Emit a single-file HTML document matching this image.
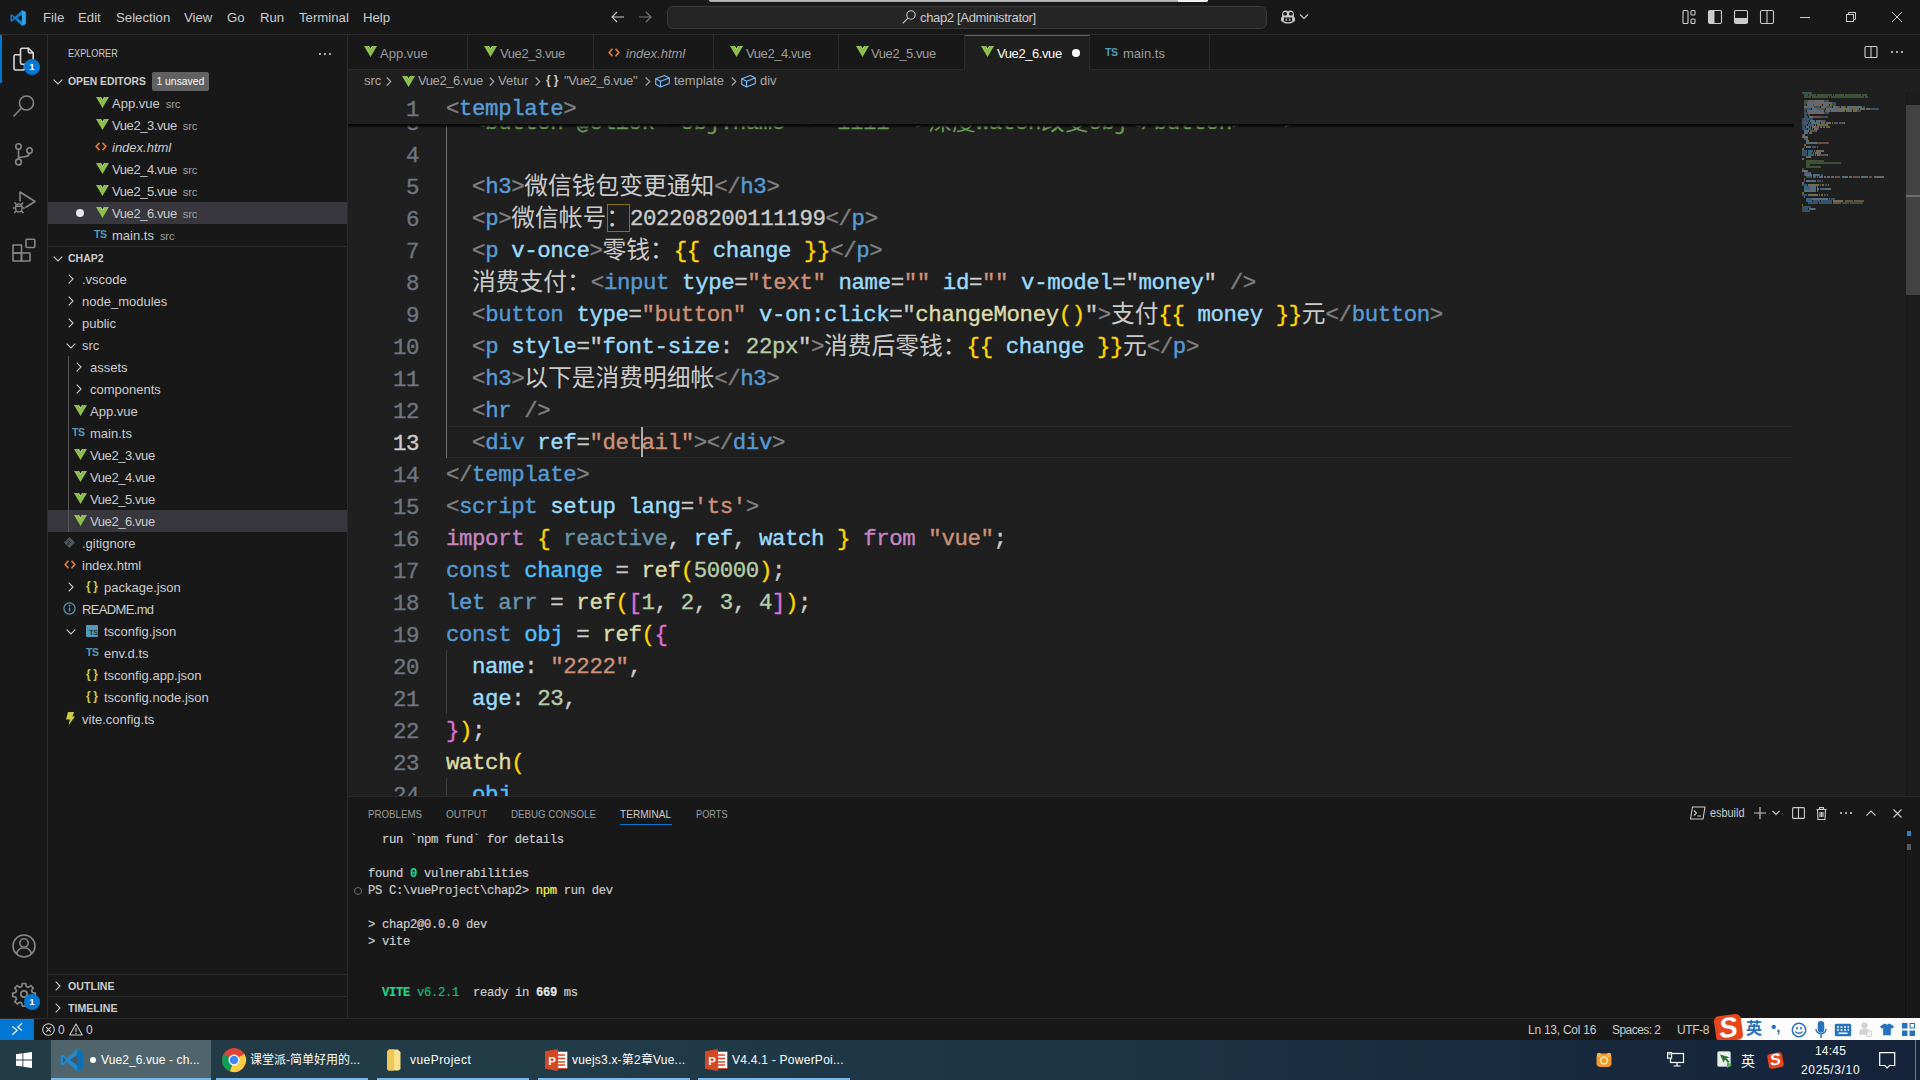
<!DOCTYPE html>
<html lang="zh">
<head>
<meta charset="utf-8">
<title>Vue2_6.vue - chap2 - Visual Studio Code</title>
<style>
*{box-sizing:border-box;margin:0;padding:0}
html,body{width:1920px;height:1080px;overflow:hidden;background:#181818}
body{position:relative;font-family:"Liberation Sans","Noto Sans CJK SC",sans-serif;font-size:13px;color:#ccc;-webkit-font-smoothing:antialiased}
.abs{position:absolute}
.t{position:absolute;white-space:pre;line-height:1}
svg{position:absolute;overflow:visible}
/* title bar */
#titlebar{position:absolute;left:0;top:0;width:1920px;height:35px;background:#181818;border-bottom:1px solid #2b2b2b}
.menu{position:absolute;top:10px;font-size:13.2px;color:#ccc;line-height:16px;white-space:pre}
#cmd{position:absolute;left:667px;top:6px;width:600px;height:23px;background:#252526;border:1px solid #3a3a3a;border-radius:6px}
/* activity bar */
#activity{position:absolute;left:0;top:35px;width:48px;height:983px;background:#181818;border-right:1px solid #2b2b2b}
/* sidebar */
#sidebar{position:absolute;left:48px;top:35px;width:300px;height:983px;background:#181818;border-right:1px solid #2b2b2b;overflow:hidden}
.row{position:absolute;left:0;width:299px;height:22px;line-height:22px;font-size:13px;color:#ccc;white-space:pre}
.row .lbl{position:absolute;top:1px}
.row .desc{color:#9d9d9d;font-size:11.3px;margin-left:6px;letter-spacing:-.2px}
.hdr{font-weight:bold;font-size:11px;color:#ccc}
/* editor */
#tabs{position:absolute;left:348px;top:35px;width:1572px;height:35px;background:#181818;border-bottom:1px solid #2b2b2b}
.tab{position:absolute;top:0;height:35px;border-right:1px solid #2b2b2b;font-size:13px;color:#9d9d9d;line-height:35px;white-space:pre}
.tab.active{background:#1f1f1f;color:#fff;border-top:1px solid #0078d4;height:36px}
#crumbs{position:absolute;left:348px;top:70px;width:1572px;height:22px;background:#1f1f1f;color:#a9a9a9;font-size:13px;line-height:22px}
#editor{position:absolute;left:348px;top:92px;width:1572px;height:704px;background:#1f1f1f;overflow:hidden}
.ln{position:absolute;left:0;width:71px;text-align:right;height:32px;line-height:32px;padding-top:2px;color:#6e7681;font-family:"Liberation Mono",monospace;font-size:22.4px;letter-spacing:-.402px;white-space:pre;-webkit-text-stroke:.38px currentColor}
.cl{position:absolute;left:98px;height:32px;line-height:32px;padding-top:1px;color:#ccc;font-family:"Liberation Mono","Noto Sans CJK SC",monospace;font-size:22.4px;letter-spacing:-.402px;white-space:pre;-webkit-text-stroke:.38px currentColor}
.cl i{font-style:normal;font-size:23.75px;font-family:"Noto Sans CJK SC",sans-serif;display:inline-block;width:23.75px;text-align:center;line-height:32px;vertical-align:top;position:relative;top:-3px;-webkit-text-stroke:0;letter-spacing:0}
.tg{color:#569cd6}.pu{color:#808080}.at{color:#9cdcfe}.st{color:#ce9178}.kw{color:#c586c0}.fn{color:#dcdcaa}.nu{color:#b5cea8}.cm{color:#6a9955}.b1{color:#ffd700}.b2{color:#da70d6}.b3{color:#179fff}.cv{color:#4fc1ff}.dim{opacity:.62}
/* panel */
#panel{position:absolute;left:348px;top:796px;width:1572px;height:222px;background:#181818;border-top:1px solid #2b2b2b;overflow:hidden}
.ptab{position:absolute;top:9px;font-size:11px;color:#9d9d9d;line-height:16px;white-space:pre}
.tl{position:absolute;left:20px;height:17px;line-height:17px;padding-top:1px;font-family:"Liberation Mono",monospace;font-size:12.2px;letter-spacing:-.32px;color:#ccc;white-space:pre;-webkit-text-stroke:.2px currentColor}
/* status */
#status{position:absolute;left:0;top:1018px;width:1920px;height:22px;background:#181818;border-top:1px solid #2b2b2b;font-size:12px;color:#ccc}
#status .s{position:absolute;top:1px;line-height:21px;white-space:pre}
/* taskbar */
#taskbar{position:absolute;left:0;top:1040px;width:1920px;height:40px;background:linear-gradient(90deg,#233b45 0%,#213b48 30%,#1c3344 60%,#17283c 85%,#15233a 100%);font-size:12px;color:#fff}
.tbtn{position:absolute;top:0;height:40px}
.tbtn .ul{position:absolute;left:0;right:0;bottom:0;height:2px;background:#76b9ed}
.tbtn .tx{position:absolute;top:12px;line-height:16px;font-size:12px;color:#fff;white-space:pre}
</style>
</head>
<body>
<!-- TITLE BAR -->
<div id="titlebar">
  <svg style="left:10px;top:9.500px" width="16" height="16" viewBox="0 0 100 100"><path d="M74 2 31 42 12 27 3 31v38l9 4 19-15 43 40 24-10V12z" fill="#0c7fd0"/><path d="M74 2v96l24-10V12z" fill="#2aa4f4"/><path d="M74 29 45 50l29 21z" fill="#181818"/><path d="M12 38v24l12-12z" fill="#181818"/></svg>
  <span class="menu" style="left:43px">File</span>
  <span class="menu" style="left:78px">Edit</span>
  <span class="menu" style="left:116px">Selection</span>
  <span class="menu" style="left:184px">View</span>
  <span class="menu" style="left:227px">Go</span>
  <span class="menu" style="left:260px">Run</span>
  <span class="menu" style="left:299px">Terminal</span>
  <span class="menu" style="left:363px">Help</span>
  <!-- nav arrows -->
  <svg style="left:610px;top:9px" width="16" height="16" viewBox="0 0 16 16" fill="none" stroke="#ccc" stroke-width="1.1"><path d="M14 8H2.5M7 3 2 8l5 5"/></svg>
  <svg style="left:637px;top:9px" width="16" height="16" viewBox="0 0 16 16" fill="none" stroke="#7a7a7a" stroke-width="1.1"><path d="M2 8h11.5M9 3l5 5-5 5"/></svg>
  <div id="cmd">
    <svg style="left:233px;top:2px" width="16" height="16" viewBox="0 0 16 16" fill="none" stroke="#ccc" stroke-width="1.1"><circle cx="10" cy="6" r="4.2"/><path d="M7 9.2 1.8 14.4"/></svg>
    <span class="t" style="left:252px;top:4px;font-size:13px;color:#ccc;letter-spacing:-.33px">chap2 [Administrator]</span>
  </div>
  <!-- copilot -->
  <svg style="left:1279px;top:8px" width="18" height="18" viewBox="0 0 18 18"><path d="M3.2 5.2C3.6 3.2 5.4 2.4 7 2.6c.9.1 1.6.5 2 1 .4-.5 1.100-.900 2-1 1.600-.200 3.400.600 3.800 2.600.3 1.300.1 2.400-.2 3 .8.600 1.400 1.600 1.400 2.600v1.400c0 .3-.1.500-.3.700C14.100 14.500 11.700 15.600 9 15.600S3.900 14.500 2.300 12.900C2.100 12.700 2 12.500 2 12.200v-1.400c0-1 .6-2 1.400-2.600-.300-.600-.500-1.700-.200-3z" fill="#ccc"/><rect x="4.200" y="4" width="3.800" height="3.600" rx="1.500" fill="#181818"/><rect x="10" y="4" width="3.800" height="3.600" rx="1.500" fill="#181818"/><path d="M4.800 9.600h8.400v3.600c-1.300.700-2.700 1-4.200 1s-2.900-.300-4.200-1z" fill="#181818"/><rect x="6.600" y="10.400" width="1.300" height="2.400" rx=".6" fill="#ccc"/><rect x="10.100" y="10.400" width="1.300" height="2.400" rx=".6" fill="#ccc"/></svg>
  <svg style="left:1299px;top:13px" width="10" height="8" viewBox="0 0 10 8" fill="none" stroke="#ccc" stroke-width="1.100"><path d="M1 1.500 5 5.500l4-4"/></svg>
  <!-- layout controls -->
  <svg style="left:1681px;top:9px" width="16" height="16" viewBox="0 0 16 16" fill="none" stroke="#ccc" stroke-width="1.100"><rect x="2" y="1.500" width="5" height="13" rx="1"/><rect x="10" y="1.500" width="4" height="4.500" rx="1"/><rect x="10" y="10" width="4" height="4.500" rx="1"/></svg>
  <svg style="left:1707px;top:9px" width="16" height="16" viewBox="0 0 16 16" fill="none" stroke="#ccc" stroke-width="1.100"><rect x="1.500" y="1.500" width="13" height="13" rx="1.500"/><rect x="2" y="2" width="5.500" height="12" fill="#ccc" stroke="none"/></svg>
  <svg style="left:1733px;top:9px" width="16" height="16" viewBox="0 0 16 16" fill="none" stroke="#ccc" stroke-width="1.100"><rect x="1.500" y="1.500" width="13" height="13" rx="1.500"/><rect x="2" y="9" width="12" height="5" fill="#ccc" stroke="none"/></svg>
  <svg style="left:1759px;top:9px" width="16" height="16" viewBox="0 0 16 16" fill="none" stroke="#ccc" stroke-width="1.100"><rect x="1.500" y="1.500" width="13" height="13" rx="1.500"/><path d="M8 1.500v13"/></svg>
  <!-- window controls -->
  <svg style="left:1800px;top:17px" width="10" height="1" viewBox="0 0 10 1"><rect width="10" height="1" fill="#ccc"/></svg>
  <svg style="left:1846px;top:12px" width="10" height="10" viewBox="0 0 10 10" fill="none" stroke="#ccc" stroke-width="1"><rect x=".5" y="2.500" width="7" height="7"/><path d="M2.500 2.500v-2h7v7h-2"/></svg>
  <svg style="left:1892px;top:12px" width="10" height="10" viewBox="0 0 10 10" fill="none" stroke="#ccc" stroke-width="1"><path d="M0 0l10 10M10 0 0 10"/></svg>
  <!-- light sliver at very top -->
  <div class="abs" style="left:709px;top:0;width:499px;height:2px;background:linear-gradient(180deg,#c4c4c4 0%,#9a9a9a 100%);border-radius:0 0 3px 3px"></div><div class="abs" style="left:1178px;top:0;width:30px;height:2px;background:#f2f2f2;border-radius:0 0 3px 0"></div>
</div>
<!-- ACTIVITY BAR -->
<div id="activity">
  <div class="abs" style="left:0;top:0;width:2px;height:48px;background:#0078d4"></div>
  <!-- explorer (files) -->
  <svg style="left:12px;top:12px" width="24" height="24" viewBox="0 0 24 24" fill="none" stroke="#d7d7d7" stroke-width="1.600" stroke-linejoin="round" stroke-linecap="round"><path d="M10 1.200h6.500l4.700 4.700v9.800a1.500 1.500 0 0 1-1.500 1.500H10a1.500 1.500 0 0 1-1.500-1.500V2.700A1.500 1.500 0 0 1 10 1.200z"/><path d="M16.300 1.400v3.100a1.500 1.500 0 0 0 1.500 1.500H21"/><path d="M8.300 7.800H3.500A1.500 1.500 0 0 0 2 9.300v12.200A1.500 1.500 0 0 0 3.500 23H11a1.500 1.500 0 0 0 1.500-1.500v-4"/></svg>
  <div class="abs" style="left:24px;top:24px;width:16px;height:16px;border-radius:8px;background:#0078d4;color:#fff;font-size:9.500px;font-weight:bold;text-align:center;line-height:16px">1</div>
  <!-- search -->
  <svg style="left:12px;top:59px" width="24" height="24" viewBox="0 0 24 24" fill="none" stroke="#868686" stroke-width="1.600"><circle cx="14.500" cy="9" r="7"/><path d="M9.500 14 1.500 22.500"/></svg>
  <!-- scm -->
  <svg style="left:12px;top:107px" width="24" height="24" viewBox="0 0 24 24" fill="none" stroke="#868686" stroke-width="1.600"><circle cx="6.500" cy="4.500" r="2.700"/><circle cx="6.500" cy="20" r="2.900"/><circle cx="17.500" cy="8.500" r="2.700"/><path d="M6.500 7.200v10M17.500 11.200c0 3.500-5 4-11 4.300"/></svg>
  <!-- debug -->
  <svg style="left:12px;top:155px" width="24" height="24" viewBox="0 0 24 24" fill="none" stroke="#868686" stroke-width="1.600" stroke-linejoin="round"><path d="M8 11.500v-9.500l15 9.500-9.500 6"/><ellipse cx="6.800" cy="18" rx="3.300" ry="4"/><path d="M4.500 14.500 2.500 12.500M9.200 14.500l2-2M3.500 18H.8M10.200 18h2.600M4.200 21 2.200 23M9.400 21l2 2M3.700 16.200h6.200"/></svg>
  <!-- extensions -->
  <svg style="left:12px;top:203px" width="24" height="24" viewBox="0 0 24 24" fill="none" stroke="#868686" stroke-width="1.600" stroke-linejoin="round"><rect x="1" y="7" width="8.500" height="8"/><rect x="1" y="15" width="8.500" height="8"/><rect x="9.500" y="15" width="8.500" height="8"/><rect x="14" y="1.200" width="8.800" height="8.300" rx="1"/></svg>
  <!-- account -->
  <svg style="left:12px;top:899px" width="24" height="24" viewBox="0 0 24 24" fill="none" stroke="#868686" stroke-width="1.600"><circle cx="12" cy="12" r="11"/><circle cx="12" cy="9" r="4.200"/><path d="M4.500 20c1-4 4-6.200 7.500-6.200s6.500 2.200 7.500 6.200"/></svg>
  <!-- settings gear -->
  <svg style="left:12px;top:947px" width="24" height="24" viewBox="0 0 24 24" fill="none" stroke="#868686" stroke-width="1.700" stroke-linejoin="round"><circle cx="12" cy="12" r="3.200"/><path d="M10.300 1.500h3.400l.6 3 1.900.8 2.600-1.700 2.400 2.400-1.700 2.600.8 1.900 3 .6v3.400l-3 .6-.8 1.900 1.700 2.600-2.400 2.400-2.600-1.700-1.900.8-.6 3h-3.400l-.6-3-1.900-.8-2.600 1.700-2.400-2.400 1.700-2.600-.8-1.900-3-.6v-3.400l3-.6.800-1.900-1.700-2.600 2.400-2.400 2.600 1.700 1.900-.8z"/></svg>
  <div class="abs" style="left:24px;top:959px;width:16px;height:16px;border-radius:8px;background:#0078d4;color:#fff;font-size:9.500px;font-weight:bold;text-align:center;line-height:16px">1</div>
</div>
<!-- SIDEBAR -->
<div id="sidebar">
<span class="t" style="left:20px;top:13px;font-size:11px;color:#ccc;transform:scaleX(.83);transform-origin:0 0">EXPLORER</span>
<svg style="left:270px;top:17px" width="14" height="4" viewBox="0 0 14 4" fill="#ccc"><circle cx="2" cy="2" r="1.100"/><circle cx="7" cy="2" r="1.100"/><circle cx="12" cy="2" r="1.100"/></svg>
<svg style="left:5px;top:44px" width="10" height="6" viewBox="0 0 10 6" fill="none" stroke="#ccc" stroke-width="1.100"><path d="M.7.7 5 5 9.300.7"/></svg>
<div class="row hdr" style="top:35px"><span class="lbl" style="left:20px;top:0;transform:scaleX(.938);transform-origin:0 0">OPEN EDITORS</span></div>
<div class="abs" style="left:104px;top:37px;width:57px;height:19px;background:#616161;border-radius:2px;color:#f8f8f8;font-size:11px;line-height:19px;text-align:center;white-space:pre"><span style="display:inline-block;transform:scaleX(.945)">1 unsaved</span></div>
<div class="abs" style="left:0;top:167px;width:299px;height:22px;background:#37373d"></div>
<svg style="left:48px;top:62px" width="13" height="11" viewBox="0 0 13 11"><path d="M0 0h3.400l3.100 5.300L9.600 0H13L6.500 11z" fill="#8dc149"/><path d="M3.400 0h1.700l1.400 2.400L7.900 0h1.700L6.500 5.300z" fill="#a6d468"/></svg>
<div class="row " style="top:57px"><span class="lbl" style="left:64px;">App.vue<span class="desc">src</span></span></div>
<svg style="left:48px;top:84px" width="13" height="11" viewBox="0 0 13 11"><path d="M0 0h3.400l3.100 5.300L9.600 0H13L6.500 11z" fill="#8dc149"/><path d="M3.400 0h1.700l1.400 2.400L7.900 0h1.700L6.500 5.300z" fill="#a6d468"/></svg>
<div class="row " style="top:79px"><span class="lbl" style="left:64px;"><span style="letter-spacing:-.42px;">Vue2_3.vue</span><span class="desc">src</span></span></div>
<svg style="left:47px;top:107px" width="12" height="9" viewBox="0 0 12 9" fill="none" stroke="#e37933" stroke-width="1.700"><path d="M4.500 .8 1.200 4.500l3.300 3.700M7.500 .8l3.300 3.700-3.300 3.700"/></svg>
<div class="row " style="top:101px"><span class="lbl" style="left:64px;font-style:italic;">index.html</span></div>
<svg style="left:48px;top:128px" width="13" height="11" viewBox="0 0 13 11"><path d="M0 0h3.400l3.100 5.300L9.600 0H13L6.500 11z" fill="#8dc149"/><path d="M3.400 0h1.700l1.400 2.400L7.900 0h1.700L6.500 5.300z" fill="#a6d468"/></svg>
<div class="row " style="top:123px"><span class="lbl" style="left:64px;"><span style="letter-spacing:-.42px;">Vue2_4.vue</span><span class="desc">src</span></span></div>
<svg style="left:48px;top:150px" width="13" height="11" viewBox="0 0 13 11"><path d="M0 0h3.400l3.100 5.300L9.600 0H13L6.500 11z" fill="#8dc149"/><path d="M3.400 0h1.700l1.400 2.400L7.900 0h1.700L6.500 5.300z" fill="#a6d468"/></svg>
<div class="row " style="top:145px"><span class="lbl" style="left:64px;"><span style="letter-spacing:-.42px;">Vue2_5.vue</span><span class="desc">src</span></span></div>
<svg style="left:48px;top:172px" width="13" height="11" viewBox="0 0 13 11"><path d="M0 0h3.400l3.100 5.300L9.600 0H13L6.500 11z" fill="#8dc149"/><path d="M3.400 0h1.700l1.400 2.400L7.900 0h1.700L6.500 5.300z" fill="#a6d468"/></svg>
<div class="row " style="top:167px"><span class="lbl" style="left:64px;"><span style="letter-spacing:-.42px;">Vue2_6.vue</span><span class="desc">src</span></span></div>
<span class="t" style="left:46px;top:194px;font-size:10.500px;font-weight:bold;color:#519aba;letter-spacing:-.3px">TS</span>
<div class="row " style="top:189px"><span class="lbl" style="left:64px;">main.ts<span class="desc">src</span></span></div>
<div class="abs" style="left:28px;top:174px;width:8px;height:8px;border-radius:4px;background:#e6e6e6"></div>
<div class="abs" style="left:0;top:211px;width:299px;height:1px;background:#2b2b2b"></div>
<svg style="left:5px;top:221px" width="10" height="6" viewBox="0 0 10 6" fill="none" stroke="#ccc" stroke-width="1.100"><path d="M.7.7 5 5 9.300.7"/></svg>
<div class="row hdr" style="top:211px"><span class="lbl" style="left:20px;top:1px;transform:scaleX(.958);transform-origin:0 0">CHAP2</span></div>
<div class="abs" style="left:0;top:475px;width:299px;height:22px;background:#37373d"></div>
<div class="abs" style="left:20px;top:321px;width:1px;height:176px;background:#585858"></div>
<svg style="left:20px;top:239px" width="6" height="10" viewBox="0 0 6 10" fill="none" stroke="#ccc" stroke-width="1.100"><path d="M.7.7 5 5 .7 9.300"/></svg>
<div class="row " style="top:233px"><span class="lbl" style="left:34px;">.vscode</span></div>
<svg style="left:20px;top:261px" width="6" height="10" viewBox="0 0 6 10" fill="none" stroke="#ccc" stroke-width="1.100"><path d="M.7.7 5 5 .7 9.300"/></svg>
<div class="row " style="top:255px"><span class="lbl" style="left:34px;">node_modules</span></div>
<svg style="left:20px;top:283px" width="6" height="10" viewBox="0 0 6 10" fill="none" stroke="#ccc" stroke-width="1.100"><path d="M.7.7 5 5 .7 9.300"/></svg>
<div class="row " style="top:277px"><span class="lbl" style="left:34px;">public</span></div>
<svg style="left:18px;top:308px" width="10" height="6" viewBox="0 0 10 6" fill="none" stroke="#ccc" stroke-width="1.100"><path d="M.7.7 5 5 9.300.7"/></svg>
<div class="row " style="top:299px"><span class="lbl" style="left:34px;">src</span></div>
<svg style="left:28px;top:327px" width="6" height="10" viewBox="0 0 6 10" fill="none" stroke="#ccc" stroke-width="1.100"><path d="M.7.7 5 5 .7 9.300"/></svg>
<div class="row " style="top:321px"><span class="lbl" style="left:42px;">assets</span></div>
<svg style="left:28px;top:349px" width="6" height="10" viewBox="0 0 6 10" fill="none" stroke="#ccc" stroke-width="1.100"><path d="M.7.7 5 5 .7 9.300"/></svg>
<div class="row " style="top:343px"><span class="lbl" style="left:42px;">components</span></div>
<svg style="left:26px;top:370px" width="13" height="11" viewBox="0 0 13 11"><path d="M0 0h3.400l3.100 5.300L9.600 0H13L6.500 11z" fill="#8dc149"/><path d="M3.400 0h1.700l1.400 2.400L7.900 0h1.700L6.500 5.300z" fill="#a6d468"/></svg>
<div class="row " style="top:365px"><span class="lbl" style="left:42px;">App.vue</span></div>
<span class="t" style="left:24px;top:392px;font-size:10.500px;font-weight:bold;color:#519aba;letter-spacing:-.3px">TS</span>
<div class="row " style="top:387px"><span class="lbl" style="left:42px;">main.ts</span></div>
<svg style="left:26px;top:414px" width="13" height="11" viewBox="0 0 13 11"><path d="M0 0h3.400l3.100 5.300L9.600 0H13L6.500 11z" fill="#8dc149"/><path d="M3.400 0h1.700l1.400 2.400L7.900 0h1.700L6.500 5.300z" fill="#a6d468"/></svg>
<div class="row " style="top:409px"><span class="lbl" style="left:42px;"><span style="letter-spacing:-.42px;">Vue2_3.vue</span></span></div>
<svg style="left:26px;top:436px" width="13" height="11" viewBox="0 0 13 11"><path d="M0 0h3.400l3.100 5.300L9.600 0H13L6.500 11z" fill="#8dc149"/><path d="M3.400 0h1.700l1.400 2.400L7.900 0h1.700L6.500 5.300z" fill="#a6d468"/></svg>
<div class="row " style="top:431px"><span class="lbl" style="left:42px;"><span style="letter-spacing:-.42px;">Vue2_4.vue</span></span></div>
<svg style="left:26px;top:458px" width="13" height="11" viewBox="0 0 13 11"><path d="M0 0h3.400l3.100 5.300L9.600 0H13L6.500 11z" fill="#8dc149"/><path d="M3.400 0h1.700l1.400 2.400L7.900 0h1.700L6.500 5.300z" fill="#a6d468"/></svg>
<div class="row " style="top:453px"><span class="lbl" style="left:42px;"><span style="letter-spacing:-.42px;">Vue2_5.vue</span></span></div>
<svg style="left:26px;top:480px" width="13" height="11" viewBox="0 0 13 11"><path d="M0 0h3.400l3.100 5.300L9.600 0H13L6.500 11z" fill="#8dc149"/><path d="M3.400 0h1.700l1.400 2.400L7.900 0h1.700L6.500 5.300z" fill="#a6d468"/></svg>
<div class="row " style="top:475px"><span class="lbl" style="left:42px;"><span style="letter-spacing:-.42px;">Vue2_6.vue</span></span></div>
<svg style="left:16px;top:502px" width="11" height="11" viewBox="0 0 11 11"><path d="M5.500 0 11 5.500 5.500 11 0 5.500z" fill="#4d5a5e"/><path d="M4 3.200 6.800 6M4.200 5.500v2.500" stroke="#181818" stroke-width="1" fill="none"/></svg>
<div class="row " style="top:497px"><span class="lbl" style="left:34px;">.gitignore</span></div>
<svg style="left:16px;top:525px" width="12" height="9" viewBox="0 0 12 9" fill="none" stroke="#e37933" stroke-width="1.700"><path d="M4.500 .8 1.200 4.500l3.300 3.700M7.500 .8l3.300 3.700-3.300 3.700"/></svg>
<div class="row " style="top:519px"><span class="lbl" style="left:34px;">index.html</span></div>
<svg style="left:20px;top:547px" width="6" height="10" viewBox="0 0 6 10" fill="none" stroke="#ccc" stroke-width="1.100"><path d="M.7.7 5 5 .7 9.300"/></svg>
<span class="t" style="left:38px;top:545px;font-size:12px;font-weight:bold;color:#cbcb41;letter-spacing:2.500px">{}</span>
<div class="row " style="top:541px"><span class="lbl" style="left:56px;">package.json</span></div>
<svg style="left:15px;top:567px" width="13" height="13" viewBox="0 0 13 13"><circle cx="6.500" cy="6.500" r="5.600" fill="none" stroke="#519aba" stroke-width="1.200"/><rect x="5.800" y="5.500" width="1.400" height="4" fill="#519aba"/><circle cx="6.500" cy="3.700" r=".9" fill="#519aba"/></svg>
<div class="row " style="top:563px"><span class="lbl" style="left:34px;"><span style="letter-spacing:-.65px;">README.md</span></span></div>
<svg style="left:18px;top:594px" width="10" height="6" viewBox="0 0 10 6" fill="none" stroke="#ccc" stroke-width="1.100"><path d="M.7.7 5 5 9.300.7"/></svg>
<div class="abs" style="left:38px;top:590px;width:12px;height:12px;background:#519aba;border-radius:1px"></div><span class="t" style="left:41px;top:594px;font-size:7.500px;font-weight:bold;color:#1f3a48;letter-spacing:-.3px">TS</span>
<div class="row " style="top:585px"><span class="lbl" style="left:56px;">tsconfig.json</span></div>
<span class="t" style="left:38px;top:612px;font-size:10.500px;font-weight:bold;color:#519aba;letter-spacing:-.3px">TS</span>
<div class="row " style="top:607px"><span class="lbl" style="left:56px;">env.d.ts</span></div>
<span class="t" style="left:38px;top:633px;font-size:12px;font-weight:bold;color:#cbcb41;letter-spacing:2.500px">{}</span>
<div class="row " style="top:629px"><span class="lbl" style="left:56px;">tsconfig.app.json</span></div>
<span class="t" style="left:38px;top:655px;font-size:12px;font-weight:bold;color:#cbcb41;letter-spacing:2.500px">{}</span>
<div class="row " style="top:651px"><span class="lbl" style="left:56px;">tsconfig.node.json</span></div>
<svg style="left:18px;top:677px" width="9" height="13" viewBox="0 0 9 13"><path d="M2 0h6L6.500 4.500H9L2.800 13l1-5.500H0z" fill="#cbcb41"/></svg>
<div class="row " style="top:673px"><span class="lbl" style="left:34px;">vite.config.ts</span></div>
<div class="abs" style="left:0;top:939px;width:299px;height:1px;background:#2b2b2b"></div>
<svg style="left:7px;top:946px" width="6" height="10" viewBox="0 0 6 10" fill="none" stroke="#ccc" stroke-width="1.100"><path d="M.7.7 5 5 .7 9.300"/></svg>
<div class="row hdr" style="top:939px"><span class="lbl" style="left:20px;top:1px;transform:scaleX(.965);transform-origin:0 0">OUTLINE</span></div>
<div class="abs" style="left:0;top:961px;width:299px;height:1px;background:#2b2b2b"></div>
<svg style="left:7px;top:968px" width="6" height="10" viewBox="0 0 6 10" fill="none" stroke="#ccc" stroke-width="1.100"><path d="M.7.7 5 5 .7 9.300"/></svg>
<div class="row hdr" style="top:961px"><span class="lbl" style="left:20px;top:1px;transform:scaleX(.965);transform-origin:0 0">TIMELINE</span></div>
</div>
<!-- TABS -->
<div id="tabs">
<div class="tab" style="left:0px;width:120px"></div>
<svg style="left:16px;top:11px" width="13" height="11" viewBox="0 0 13 11"><path d="M0 0h3.400l3.100 5.300L9.600 0H13L6.500 11z" fill="#8dc149"/><path d="M3.400 0h1.700l1.400 2.400L7.900 0h1.700L6.500 5.300z" fill="#a6d468"/></svg>
<span class="t" style="left:32px;top:12px;font-size:13px;color:#9d9d9d;">App.vue</span>
<div class="tab" style="left:120px;width:126px"></div>
<svg style="left:136px;top:11px" width="13" height="11" viewBox="0 0 13 11"><path d="M0 0h3.400l3.100 5.300L9.600 0H13L6.500 11z" fill="#8dc149"/><path d="M3.400 0h1.700l1.400 2.400L7.900 0h1.700L6.500 5.300z" fill="#a6d468"/></svg>
<span class="t" style="left:152px;top:12px;font-size:13px;color:#9d9d9d;letter-spacing:-.42px;">Vue2_3.vue</span>
<div class="tab" style="left:246px;width:120px"></div>
<svg style="left:260px;top:13px" width="12" height="9" viewBox="0 0 12 9" fill="none" stroke="#e37933" stroke-width="1.700"><path d="M4.500 .8 1.200 4.500l3.300 3.700M7.500 .8l3.300 3.700-3.300 3.700"/></svg>
<span class="t" style="left:278px;top:12px;font-size:13px;color:#9d9d9d;font-style:italic;">index.html</span>
<div class="tab" style="left:366px;width:125px"></div>
<svg style="left:382px;top:11px" width="13" height="11" viewBox="0 0 13 11"><path d="M0 0h3.400l3.100 5.300L9.600 0H13L6.500 11z" fill="#8dc149"/><path d="M3.400 0h1.700l1.400 2.400L7.900 0h1.700L6.500 5.300z" fill="#a6d468"/></svg>
<span class="t" style="left:398px;top:12px;font-size:13px;color:#9d9d9d;letter-spacing:-.42px;">Vue2_4.vue</span>
<div class="tab" style="left:491px;width:126px"></div>
<svg style="left:508px;top:11px" width="13" height="11" viewBox="0 0 13 11"><path d="M0 0h3.400l3.100 5.300L9.600 0H13L6.500 11z" fill="#8dc149"/><path d="M3.400 0h1.700l1.400 2.400L7.900 0h1.700L6.500 5.300z" fill="#a6d468"/></svg>
<span class="t" style="left:523px;top:12px;font-size:13px;color:#9d9d9d;letter-spacing:-.42px;">Vue2_5.vue</span>
<div class="tab active" style="left:617px;width:125px"></div>
<svg style="left:633px;top:11px" width="13" height="11" viewBox="0 0 13 11"><path d="M0 0h3.400l3.100 5.300L9.600 0H13L6.500 11z" fill="#8dc149"/><path d="M3.400 0h1.700l1.400 2.400L7.900 0h1.700L6.500 5.300z" fill="#a6d468"/></svg>
<span class="t" style="left:649px;top:12px;font-size:13px;color:#fff;letter-spacing:-.42px;">Vue2_6.vue</span>
<div class="tab" style="left:742px;width:120px"></div>
<span class="t" style="left:757px;top:12px;font-size:10.500px;font-weight:bold;color:#519aba;letter-spacing:-.3px">TS</span>
<span class="t" style="left:775px;top:12px;font-size:13px;color:#9d9d9d;">main.ts</span>
<div class="abs" style="left:724px;top:14px;width:8px;height:8px;border-radius:4px;background:#fff"></div>
<svg style="left:1515px;top:9px" width="16" height="16" viewBox="0 0 16 16" fill="none" stroke="#ccc" stroke-width="1.100"><rect x="2" y="2.500" width="12" height="11" rx="1"/><path d="M8 2.500v11"/></svg>
<svg style="left:1542px;top:15px" width="14" height="4" viewBox="0 0 14 4" fill="#ccc"><circle cx="2" cy="2" r="1.100"/><circle cx="7" cy="2" r="1.100"/><circle cx="12" cy="2" r="1.100"/></svg>
</div>
<!-- BREADCRUMBS -->
<div id="crumbs">
<span class="t" style="left:16px;top:4px;font-size:13px;color:#a9a9a9;">src</span>
<svg style="left:38px;top:7px" width="6" height="9" viewBox="0 0 6 9" fill="none" stroke="#a9a9a9" stroke-width="1.100"><path d="M.7.5 4.800 4.500.7 8.500"/></svg>
<svg style="left:54px;top:6px" width="13" height="11" viewBox="0 0 13 11"><path d="M0 0h3.400l3.100 5.300L9.600 0H13L6.500 11z" fill="#8dc149"/><path d="M3.400 0h1.700l1.400 2.400L7.900 0h1.700L6.500 5.300z" fill="#a6d468"/></svg>
<span class="t" style="left:70px;top:4px;font-size:13px;color:#a9a9a9;letter-spacing:-.42px;">Vue2_6.vue</span>
<svg style="left:141px;top:7px" width="6" height="9" viewBox="0 0 6 9" fill="none" stroke="#a9a9a9" stroke-width="1.100"><path d="M.7.5 4.800 4.500.7 8.500"/></svg>
<span class="t" style="left:150px;top:4px;font-size:13px;color:#a9a9a9;">Vetur</span>
<svg style="left:187px;top:7px" width="6" height="9" viewBox="0 0 6 9" fill="none" stroke="#a9a9a9" stroke-width="1.100"><path d="M.7.5 4.800 4.500.7 8.500"/></svg>
<span class="t" style="left:198px;top:4px;font-size:12px;font-weight:bold;color:#ccc;letter-spacing:3px">{}</span>
<span class="t" style="left:216px;top:4px;font-size:13px;color:#a9a9a9;letter-spacing:-.42px;">"Vue2_6.vue"</span>
<svg style="left:296.5px;top:7px" width="6" height="9" viewBox="0 0 6 9" fill="none" stroke="#a9a9a9" stroke-width="1.100"><path d="M.7.5 4.800 4.500.7 8.500"/></svg>
<svg style="left:307px;top:4px" width="15" height="14" viewBox="0 0 15 14" fill="none" stroke="#75beff" stroke-width="1.100" stroke-linejoin="round"><path d="M9.500 1.500 14.300 4v5.500L5.500 13 .7 10.300V4.800z"/><path d="M.7 4.800 5.500 7.300 14.300 4M5.500 7.300V13"/></svg>
<span class="t" style="left:326px;top:4px;font-size:13px;color:#a9a9a9;">template</span>
<svg style="left:382.5px;top:7px" width="6" height="9" viewBox="0 0 6 9" fill="none" stroke="#a9a9a9" stroke-width="1.100"><path d="M.7.5 4.800 4.500.7 8.500"/></svg>
<svg style="left:393px;top:4px" width="15" height="14" viewBox="0 0 15 14" fill="none" stroke="#75beff" stroke-width="1.100" stroke-linejoin="round"><path d="M9.500 1.500 14.300 4v5.500L5.500 13 .7 10.300V4.800z"/><path d="M.7 4.800 5.500 7.300 14.300 4M5.500 7.300V13"/></svg>
<span class="t" style="left:412px;top:4px;font-size:13px;color:#a9a9a9;">div</span>
</div>
<!-- EDITOR -->
<div id="editor">
<div class="abs" style="left:98px;top:334px;width:1346px;height:32px;border-top:1px solid #2a2a2a;border-bottom:1px solid #2a2a2a"></div>
<div class="abs" style="left:98px;top:-18px;width:1px;height:384px;background:#707070"></div>
<div class="abs" style="left:98px;top:558px;width:1px;height:64px;background:#404040"></div>
<div class="abs" style="left:98px;top:686px;width:1px;height:64px;background:#404040"></div>
<div class="abs" style="left:259px;top:112px;width:23px;height:28px;border:1px solid #8a7205"></div>
<div class="ln" style="top:14px;">3</div>
<div class="cl" style="top:14px"><span class="cm">  &lt;button @click="obj.name = '1111'"&gt;<i>深</i><i>度</i>watch<i>改</i><i>变</i>obj&lt;/button&gt; --&gt;</span></div>
<div class="ln" style="top:46px;">4</div>
<div class="ln" style="top:78px;">5</div>
<div class="cl" style="top:78px">  <span class="pu">&lt;</span><span class="tg">h3</span><span class="pu">&gt;</span><i>微</i><i>信</i><i>钱</i><i>包</i><i>变</i><i>更</i><i>通</i><i>知</i><span class="pu">&lt;/</span><span class="tg">h3</span><span class="pu">&gt;</span></div>
<div class="ln" style="top:110px;">6</div>
<div class="cl" style="top:110px">  <span class="pu">&lt;</span><span class="tg">p</span><span class="pu">&gt;</span><i>微</i><i>信</i><i>帐</i><i>号</i><i>：</i>202208200111199<span class="pu">&lt;/</span><span class="tg">p</span><span class="pu">&gt;</span></div>
<div class="ln" style="top:142px;">7</div>
<div class="cl" style="top:142px">  <span class="pu">&lt;</span><span class="tg">p</span><span class="at"> v-once</span><span class="pu">&gt;</span><i>零</i><i>钱</i><i>：</i><span class="b1">{{</span><span class="at"> change </span><span class="b1">}}</span><span class="pu">&lt;/</span><span class="tg">p</span><span class="pu">&gt;</span></div>
<div class="ln" style="top:174px;">8</div>
<div class="cl" style="top:174px">  <i>消</i><i>费</i><i>支</i><i>付</i><i>：</i><span class="pu">&lt;</span><span class="tg">input</span><span class="at"> type</span>=<span class="st">"text"</span><span class="at"> name</span>=<span class="st">""</span><span class="at"> id</span>=<span class="st">""</span><span class="at"> v-model</span>="<span class="at">money</span>"<span class="pu"> /&gt;</span></div>
<div class="ln" style="top:206px;">9</div>
<div class="cl" style="top:206px">  <span class="pu">&lt;</span><span class="tg">button</span><span class="at"> type</span>=<span class="st">"button"</span><span class="at"> v-on:click</span>="<span class="fn">changeMoney</span><span class="b1">()</span>"<span class="pu">&gt;</span><i>支</i><i>付</i><span class="b1">{{</span><span class="at"> money </span><span class="b1">}}</span><i>元</i><span class="pu">&lt;/</span><span class="tg">button</span><span class="pu">&gt;</span></div>
<div class="ln" style="top:238px;">10</div>
<div class="cl" style="top:238px">  <span class="pu">&lt;</span><span class="tg">p</span><span class="at"> style</span>="<span class="at">font-size</span>: <span class="nu">22px</span>"<span class="pu">&gt;</span><i>消</i><i>费</i><i>后</i><i>零</i><i>钱</i><i>：</i><span class="b1">{{</span><span class="at"> change </span><span class="b1">}}</span><i>元</i><span class="pu">&lt;/</span><span class="tg">p</span><span class="pu">&gt;</span></div>
<div class="ln" style="top:270px;">11</div>
<div class="cl" style="top:270px">  <span class="pu">&lt;</span><span class="tg">h3</span><span class="pu">&gt;</span><i>以</i><i>下</i><i>是</i><i>消</i><i>费</i><i>明</i><i>细</i><i>帐</i><span class="pu">&lt;/</span><span class="tg">h3</span><span class="pu">&gt;</span></div>
<div class="ln" style="top:302px;">12</div>
<div class="cl" style="top:302px">  <span class="pu">&lt;</span><span class="tg">hr</span><span class="pu"> /&gt;</span></div>
<div class="ln" style="top:334px;color:#ccc">13</div>
<div class="cl" style="top:334px">  <span class="pu">&lt;</span><span class="tg">div</span><span class="at"> ref</span>=<span class="st">"detail"</span><span class="pu">&gt;&lt;/</span><span class="tg">div</span><span class="pu">&gt;</span></div>
<div class="ln" style="top:366px;">14</div>
<div class="cl" style="top:366px"><span class="pu">&lt;/</span><span class="tg">template</span><span class="pu">&gt;</span></div>
<div class="ln" style="top:398px;">15</div>
<div class="cl" style="top:398px"><span class="pu">&lt;</span><span class="tg">script</span><span class="at"> setup lang</span>=<span class="st">'ts'</span><span class="pu">&gt;</span></div>
<div class="ln" style="top:430px;">16</div>
<div class="cl" style="top:430px"><span class="kw">import</span><span class="b1"> {</span><span class="at dim"> reactive</span>,<span class="at"> ref</span>,<span class="at"> watch</span><span class="b1"> }</span><span class="kw"> from</span><span class="st"> "vue"</span>;</div>
<div class="ln" style="top:462px;">17</div>
<div class="cl" style="top:462px"><span class="tg">const</span><span class="cv"> change</span> = <span class="fn">ref</span><span class="b1">(</span><span class="nu">50000</span><span class="b1">)</span>;</div>
<div class="ln" style="top:494px;">18</div>
<div class="cl" style="top:494px"><span class="tg">let</span><span class="at dim"> arr</span> = <span class="fn">ref</span><span class="b1">(</span><span class="b2">[</span><span class="nu">1</span>, <span class="nu">2</span>, <span class="nu">3</span>, <span class="nu">4</span><span class="b2">]</span><span class="b1">)</span>;</div>
<div class="ln" style="top:526px;">19</div>
<div class="cl" style="top:526px"><span class="tg">const</span><span class="cv"> obj</span> = <span class="fn">ref</span><span class="b1">(</span><span class="b2">{</span></div>
<div class="ln" style="top:558px;">20</div>
<div class="cl" style="top:558px"><span class="at">  name</span>:<span class="st"> "2222"</span>,</div>
<div class="ln" style="top:590px;">21</div>
<div class="cl" style="top:590px"><span class="at">  age</span>: <span class="nu">23</span>,</div>
<div class="ln" style="top:622px;">22</div>
<div class="cl" style="top:622px"><span class="b2">}</span><span class="b1">)</span>;</div>
<div class="ln" style="top:654px;">23</div>
<div class="cl" style="top:654px"><span class="fn">watch</span><span class="b1">(</span></div>
<div class="ln" style="top:686px;">24</div>
<div class="cl" style="top:686px"><span class="cv">  obj</span>,</div>
<div class="abs" style="left:293px;top:335px;width:2px;height:30px;background:#aeafad"></div>
<div class="abs" style="left:0;top:0;width:1446px;height:32px;background:#1f1f1f"></div>
<div class="abs" style="left:0;top:32px;width:1446px;height:4px;background:linear-gradient(180deg,#050505 0%,rgba(5,5,5,.85) 40%,rgba(10,10,10,0) 100%)"></div>
<div class="ln" style="top:0">1</div>
<div class="cl" style="top:0"><span class="pu">&lt;</span><span class="tg">template</span><span class="pu">&gt;</span></div>
<div class="abs" style="left:1558px;top:0;width:14px;height:704px;background:#1d1d1d;border-left:1px solid #161616"></div>
<div class="abs" style="left:1558px;top:13px;width:14px;height:190px;background:#424242"></div>
<div class="abs" style="left:1558px;top:103px;width:14px;height:2px;background:#6e6e6e"></div>
<!--MINIMAP--><svg style="left:1454px;top:0" width="100" height="122" viewBox="0 0 100 122" shape-rendering="crispEdges"><rect x="0.0" y="0" width="1.0" height="1.600" fill="#808080" opacity="0.42"/><rect x="1.0" y="0" width="8.0" height="1.600" fill="#569cd6" opacity="0.42"/><rect x="9.0" y="0" width="1.0" height="1.600" fill="#808080" opacity="0.42"/><rect x="2.0" y="2" width="4.0" height="1.600" fill="#6a9955" opacity="0.42"/><rect x="7.0" y="2" width="7.0" height="1.600" fill="#6a9955" opacity="0.42"/><rect x="15.0" y="2" width="15.0" height="1.600" fill="#6a9955" opacity="0.42"/><rect x="31.0" y="2" width="1.0" height="1.600" fill="#6a9955" opacity="0.42"/><rect x="33.0" y="2" width="9.0" height="1.600" fill="#6a9955" opacity="0.42"/><rect x="43.0" y="2" width="16.0" height="1.600" fill="#6a9955" opacity="0.42"/><rect x="60.0" y="2" width="5.0" height="1.600" fill="#6a9955" opacity="0.42"/><rect x="2.0" y="4" width="7.0" height="1.600" fill="#6a9955" opacity="0.42"/><rect x="10.0" y="4" width="16.0" height="1.600" fill="#6a9955" opacity="0.42"/><rect x="27.0" y="4" width="1.0" height="1.600" fill="#6a9955" opacity="0.42"/><rect x="29.0" y="4" width="33.0" height="1.600" fill="#6a9955" opacity="0.42"/><rect x="63.0" y="4" width="3.0" height="1.600" fill="#6a9955" opacity="0.42"/><rect x="2.0" y="8" width="1.0" height="1.600" fill="#808080" opacity="0.42"/><rect x="3.0" y="8" width="2.0" height="1.600" fill="#569cd6" opacity="0.42"/><rect x="5.0" y="8" width="1.0" height="1.600" fill="#808080" opacity="0.42"/><rect x="6.0" y="8" width="16.0" height="1.600" fill="#cccccc" opacity="0.42"/><rect x="22.0" y="8" width="2.0" height="1.600" fill="#808080" opacity="0.42"/><rect x="24.0" y="8" width="2.0" height="1.600" fill="#569cd6" opacity="0.42"/><rect x="26.0" y="8" width="1.0" height="1.600" fill="#808080" opacity="0.42"/><rect x="2.0" y="10" width="1.0" height="1.600" fill="#808080" opacity="0.42"/><rect x="3.0" y="10" width="1.0" height="1.600" fill="#569cd6" opacity="0.42"/><rect x="4.0" y="10" width="1.0" height="1.600" fill="#808080" opacity="0.42"/><rect x="5.0" y="10" width="25.0" height="1.600" fill="#cccccc" opacity="0.42"/><rect x="30.0" y="10" width="2.0" height="1.600" fill="#808080" opacity="0.42"/><rect x="32.0" y="10" width="1.0" height="1.600" fill="#569cd6" opacity="0.42"/><rect x="33.0" y="10" width="1.0" height="1.600" fill="#808080" opacity="0.42"/><rect x="2.0" y="12" width="1.0" height="1.600" fill="#808080" opacity="0.42"/><rect x="3.0" y="12" width="1.0" height="1.600" fill="#569cd6" opacity="0.42"/><rect x="5.0" y="12" width="6.0" height="1.600" fill="#9cdcfe" opacity="0.42"/><rect x="11.0" y="12" width="1.0" height="1.600" fill="#808080" opacity="0.42"/><rect x="12.0" y="12" width="6.0" height="1.600" fill="#cccccc" opacity="0.42"/><rect x="18.0" y="12" width="2.0" height="1.600" fill="#ffd700" opacity="0.42"/><rect x="21.0" y="12" width="6.0" height="1.600" fill="#9cdcfe" opacity="0.42"/><rect x="28.0" y="12" width="2.0" height="1.600" fill="#ffd700" opacity="0.42"/><rect x="30.0" y="12" width="2.0" height="1.600" fill="#808080" opacity="0.42"/><rect x="32.0" y="12" width="1.0" height="1.600" fill="#569cd6" opacity="0.42"/><rect x="33.0" y="12" width="1.0" height="1.600" fill="#808080" opacity="0.42"/><rect x="2.0" y="14" width="10.0" height="1.600" fill="#cccccc" opacity="0.42"/><rect x="12.0" y="14" width="1.0" height="1.600" fill="#808080" opacity="0.42"/><rect x="13.0" y="14" width="5.0" height="1.600" fill="#569cd6" opacity="0.42"/><rect x="19.0" y="14" width="4.0" height="1.600" fill="#9cdcfe" opacity="0.42"/><rect x="23.0" y="14" width="1.0" height="1.600" fill="#cccccc" opacity="0.42"/><rect x="24.0" y="14" width="6.0" height="1.600" fill="#ce9178" opacity="0.42"/><rect x="31.0" y="14" width="4.0" height="1.600" fill="#9cdcfe" opacity="0.42"/><rect x="35.0" y="14" width="1.0" height="1.600" fill="#cccccc" opacity="0.42"/><rect x="36.0" y="14" width="2.0" height="1.600" fill="#ce9178" opacity="0.42"/><rect x="39.0" y="14" width="2.0" height="1.600" fill="#9cdcfe" opacity="0.42"/><rect x="41.0" y="14" width="1.0" height="1.600" fill="#cccccc" opacity="0.42"/><rect x="42.0" y="14" width="2.0" height="1.600" fill="#ce9178" opacity="0.42"/><rect x="45.0" y="14" width="7.0" height="1.600" fill="#9cdcfe" opacity="0.42"/><rect x="52.0" y="14" width="2.0" height="1.600" fill="#cccccc" opacity="0.42"/><rect x="54.0" y="14" width="5.0" height="1.600" fill="#9cdcfe" opacity="0.42"/><rect x="59.0" y="14" width="1.0" height="1.600" fill="#cccccc" opacity="0.42"/><rect x="61.0" y="14" width="2.0" height="1.600" fill="#808080" opacity="0.42"/><rect x="2.0" y="16" width="1.0" height="1.600" fill="#808080" opacity="0.42"/><rect x="3.0" y="16" width="6.0" height="1.600" fill="#569cd6" opacity="0.42"/><rect x="10.0" y="16" width="4.0" height="1.600" fill="#9cdcfe" opacity="0.42"/><rect x="14.0" y="16" width="1.0" height="1.600" fill="#cccccc" opacity="0.42"/><rect x="15.0" y="16" width="8.0" height="1.600" fill="#ce9178" opacity="0.42"/><rect x="24.0" y="16" width="10.0" height="1.600" fill="#9cdcfe" opacity="0.42"/><rect x="34.0" y="16" width="2.0" height="1.600" fill="#cccccc" opacity="0.42"/><rect x="36.0" y="16" width="11.0" height="1.600" fill="#dcdcaa" opacity="0.42"/><rect x="47.0" y="16" width="2.0" height="1.600" fill="#ffd700" opacity="0.42"/><rect x="49.0" y="16" width="1.0" height="1.600" fill="#cccccc" opacity="0.42"/><rect x="50.0" y="16" width="1.0" height="1.600" fill="#808080" opacity="0.42"/><rect x="51.0" y="16" width="4.0" height="1.600" fill="#cccccc" opacity="0.42"/><rect x="55.0" y="16" width="2.0" height="1.600" fill="#ffd700" opacity="0.42"/><rect x="58.0" y="16" width="5.0" height="1.600" fill="#9cdcfe" opacity="0.42"/><rect x="64.0" y="16" width="2.0" height="1.600" fill="#ffd700" opacity="0.42"/><rect x="66.0" y="16" width="2.0" height="1.600" fill="#cccccc" opacity="0.42"/><rect x="68.0" y="16" width="2.0" height="1.600" fill="#808080" opacity="0.42"/><rect x="70.0" y="16" width="6.0" height="1.600" fill="#569cd6" opacity="0.42"/><rect x="76.0" y="16" width="1.0" height="1.600" fill="#808080" opacity="0.42"/><rect x="2.0" y="18" width="1.0" height="1.600" fill="#808080" opacity="0.42"/><rect x="3.0" y="18" width="1.0" height="1.600" fill="#569cd6" opacity="0.42"/><rect x="5.0" y="18" width="5.0" height="1.600" fill="#9cdcfe" opacity="0.42"/><rect x="10.0" y="18" width="2.0" height="1.600" fill="#cccccc" opacity="0.42"/><rect x="12.0" y="18" width="9.0" height="1.600" fill="#9cdcfe" opacity="0.42"/><rect x="21.0" y="18" width="1.0" height="1.600" fill="#cccccc" opacity="0.42"/><rect x="23.0" y="18" width="4.0" height="1.600" fill="#b5cea8" opacity="0.42"/><rect x="27.0" y="18" width="1.0" height="1.600" fill="#cccccc" opacity="0.42"/><rect x="28.0" y="18" width="1.0" height="1.600" fill="#808080" opacity="0.42"/><rect x="29.0" y="18" width="12.0" height="1.600" fill="#cccccc" opacity="0.42"/><rect x="41.0" y="18" width="2.0" height="1.600" fill="#ffd700" opacity="0.42"/><rect x="44.0" y="18" width="6.0" height="1.600" fill="#9cdcfe" opacity="0.42"/><rect x="51.0" y="18" width="2.0" height="1.600" fill="#ffd700" opacity="0.42"/><rect x="53.0" y="18" width="2.0" height="1.600" fill="#cccccc" opacity="0.42"/><rect x="55.0" y="18" width="2.0" height="1.600" fill="#808080" opacity="0.42"/><rect x="57.0" y="18" width="1.0" height="1.600" fill="#569cd6" opacity="0.42"/><rect x="58.0" y="18" width="1.0" height="1.600" fill="#808080" opacity="0.42"/><rect x="2.0" y="20" width="1.0" height="1.600" fill="#808080" opacity="0.42"/><rect x="3.0" y="20" width="2.0" height="1.600" fill="#569cd6" opacity="0.42"/><rect x="5.0" y="20" width="1.0" height="1.600" fill="#808080" opacity="0.42"/><rect x="6.0" y="20" width="16.0" height="1.600" fill="#cccccc" opacity="0.42"/><rect x="22.0" y="20" width="2.0" height="1.600" fill="#808080" opacity="0.42"/><rect x="24.0" y="20" width="2.0" height="1.600" fill="#569cd6" opacity="0.42"/><rect x="26.0" y="20" width="1.0" height="1.600" fill="#808080" opacity="0.42"/><rect x="2.0" y="22" width="1.0" height="1.600" fill="#808080" opacity="0.42"/><rect x="3.0" y="22" width="2.0" height="1.600" fill="#569cd6" opacity="0.42"/><rect x="6.0" y="22" width="2.0" height="1.600" fill="#808080" opacity="0.42"/><rect x="2.0" y="24" width="1.0" height="1.600" fill="#808080" opacity="0.42"/><rect x="3.0" y="24" width="3.0" height="1.600" fill="#569cd6" opacity="0.42"/><rect x="7.0" y="24" width="3.0" height="1.600" fill="#9cdcfe" opacity="0.42"/><rect x="10.0" y="24" width="1.0" height="1.600" fill="#cccccc" opacity="0.42"/><rect x="11.0" y="24" width="8.0" height="1.600" fill="#ce9178" opacity="0.42"/><rect x="19.0" y="24" width="3.0" height="1.600" fill="#808080" opacity="0.42"/><rect x="22.0" y="24" width="3.0" height="1.600" fill="#569cd6" opacity="0.42"/><rect x="25.0" y="24" width="1.0" height="1.600" fill="#808080" opacity="0.42"/><rect x="0.0" y="26" width="2.0" height="1.600" fill="#808080" opacity="0.42"/><rect x="2.0" y="26" width="8.0" height="1.600" fill="#569cd6" opacity="0.42"/><rect x="10.0" y="26" width="1.0" height="1.600" fill="#808080" opacity="0.42"/><rect x="0.0" y="28" width="1.0" height="1.600" fill="#808080" opacity="0.42"/><rect x="1.0" y="28" width="6.0" height="1.600" fill="#569cd6" opacity="0.42"/><rect x="8.0" y="28" width="5.0" height="1.600" fill="#9cdcfe" opacity="0.42"/><rect x="14.0" y="28" width="4.0" height="1.600" fill="#9cdcfe" opacity="0.42"/><rect x="18.0" y="28" width="1.0" height="1.600" fill="#cccccc" opacity="0.42"/><rect x="19.0" y="28" width="4.0" height="1.600" fill="#ce9178" opacity="0.42"/><rect x="23.0" y="28" width="1.0" height="1.600" fill="#808080" opacity="0.42"/><rect x="0.0" y="30" width="6.0" height="1.600" fill="#c586c0" opacity="0.42"/><rect x="7.0" y="30" width="1.0" height="1.600" fill="#ffd700" opacity="0.42"/><rect x="9.0" y="30" width="8.0" height="1.600" fill="#9cdcfe" opacity="0.42"/><rect x="17.0" y="30" width="1.0" height="1.600" fill="#cccccc" opacity="0.42"/><rect x="19.0" y="30" width="3.0" height="1.600" fill="#9cdcfe" opacity="0.42"/><rect x="22.0" y="30" width="1.0" height="1.600" fill="#cccccc" opacity="0.42"/><rect x="24.0" y="30" width="5.0" height="1.600" fill="#9cdcfe" opacity="0.42"/><rect x="30.0" y="30" width="1.0" height="1.600" fill="#ffd700" opacity="0.42"/><rect x="32.0" y="30" width="4.0" height="1.600" fill="#c586c0" opacity="0.42"/><rect x="37.0" y="30" width="5.0" height="1.600" fill="#ce9178" opacity="0.42"/><rect x="42.0" y="30" width="1.0" height="1.600" fill="#cccccc" opacity="0.42"/><rect x="0.0" y="32" width="5.0" height="1.600" fill="#569cd6" opacity="0.42"/><rect x="6.0" y="32" width="6.0" height="1.600" fill="#4fc1ff" opacity="0.42"/><rect x="13.0" y="32" width="1.0" height="1.600" fill="#cccccc" opacity="0.42"/><rect x="15.0" y="32" width="3.0" height="1.600" fill="#dcdcaa" opacity="0.42"/><rect x="18.0" y="32" width="1.0" height="1.600" fill="#ffd700" opacity="0.42"/><rect x="19.0" y="32" width="5.0" height="1.600" fill="#b5cea8" opacity="0.42"/><rect x="24.0" y="32" width="1.0" height="1.600" fill="#ffd700" opacity="0.42"/><rect x="25.0" y="32" width="1.0" height="1.600" fill="#cccccc" opacity="0.42"/><rect x="0.0" y="34" width="3.0" height="1.600" fill="#569cd6" opacity="0.42"/><rect x="4.0" y="34" width="3.0" height="1.600" fill="#9cdcfe" opacity="0.42"/><rect x="8.0" y="34" width="1.0" height="1.600" fill="#cccccc" opacity="0.42"/><rect x="10.0" y="34" width="3.0" height="1.600" fill="#dcdcaa" opacity="0.42"/><rect x="13.0" y="34" width="1.0" height="1.600" fill="#ffd700" opacity="0.42"/><rect x="14.0" y="34" width="1.0" height="1.600" fill="#da70d6" opacity="0.42"/><rect x="15.0" y="34" width="1.0" height="1.600" fill="#b5cea8" opacity="0.42"/><rect x="16.0" y="34" width="1.0" height="1.600" fill="#cccccc" opacity="0.42"/><rect x="18.0" y="34" width="1.0" height="1.600" fill="#b5cea8" opacity="0.42"/><rect x="19.0" y="34" width="1.0" height="1.600" fill="#cccccc" opacity="0.42"/><rect x="21.0" y="34" width="1.0" height="1.600" fill="#b5cea8" opacity="0.42"/><rect x="22.0" y="34" width="1.0" height="1.600" fill="#cccccc" opacity="0.42"/><rect x="24.0" y="34" width="1.0" height="1.600" fill="#b5cea8" opacity="0.42"/><rect x="25.0" y="34" width="1.0" height="1.600" fill="#da70d6" opacity="0.42"/><rect x="26.0" y="34" width="1.0" height="1.600" fill="#ffd700" opacity="0.42"/><rect x="27.0" y="34" width="1.0" height="1.600" fill="#cccccc" opacity="0.42"/><rect x="0.0" y="36" width="5.0" height="1.600" fill="#569cd6" opacity="0.42"/><rect x="6.0" y="36" width="3.0" height="1.600" fill="#4fc1ff" opacity="0.42"/><rect x="10.0" y="36" width="1.0" height="1.600" fill="#cccccc" opacity="0.42"/><rect x="12.0" y="36" width="3.0" height="1.600" fill="#dcdcaa" opacity="0.42"/><rect x="15.0" y="36" width="1.0" height="1.600" fill="#ffd700" opacity="0.42"/><rect x="16.0" y="36" width="1.0" height="1.600" fill="#da70d6" opacity="0.42"/><rect x="2.0" y="38" width="4.0" height="1.600" fill="#9cdcfe" opacity="0.42"/><rect x="6.0" y="38" width="1.0" height="1.600" fill="#cccccc" opacity="0.42"/><rect x="8.0" y="38" width="6.0" height="1.600" fill="#ce9178" opacity="0.42"/><rect x="14.0" y="38" width="1.0" height="1.600" fill="#cccccc" opacity="0.42"/><rect x="2.0" y="40" width="3.0" height="1.600" fill="#9cdcfe" opacity="0.42"/><rect x="5.0" y="40" width="1.0" height="1.600" fill="#cccccc" opacity="0.42"/><rect x="7.0" y="40" width="2.0" height="1.600" fill="#b5cea8" opacity="0.42"/><rect x="9.0" y="40" width="1.0" height="1.600" fill="#cccccc" opacity="0.42"/><rect x="0.0" y="42" width="1.0" height="1.600" fill="#da70d6" opacity="0.42"/><rect x="1.0" y="42" width="1.0" height="1.600" fill="#ffd700" opacity="0.42"/><rect x="2.0" y="42" width="1.0" height="1.600" fill="#cccccc" opacity="0.42"/><rect x="0.0" y="44" width="5.0" height="1.600" fill="#dcdcaa" opacity="0.42"/><rect x="5.0" y="44" width="1.0" height="1.600" fill="#ffd700" opacity="0.42"/><rect x="2.0" y="46" width="3.0" height="1.600" fill="#4fc1ff" opacity="0.42"/><rect x="5.0" y="46" width="1.0" height="1.600" fill="#cccccc" opacity="0.42"/><rect x="4.0" y="48" width="2.0" height="1.600" fill="#cccccc" opacity="0.42"/><rect x="6.0" y="48" width="1.0" height="1.600" fill="#ffd700" opacity="0.42"/><rect x="4.0" y="50" width="7.0" height="1.600" fill="#9cdcfe" opacity="0.42"/><rect x="11.0" y="50" width="1.0" height="1.600" fill="#cccccc" opacity="0.42"/><rect x="12.0" y="50" width="3.0" height="1.600" fill="#dcdcaa" opacity="0.42"/><rect x="15.0" y="50" width="12.0" height="1.600" fill="#ce9178" opacity="0.42"/><rect x="2.0" y="52" width="2.0" height="1.600" fill="#ffd700" opacity="0.42"/><rect x="2.0" y="54" width="1.0" height="1.600" fill="#da70d6" opacity="0.42"/><rect x="4.0" y="54" width="4.0" height="1.600" fill="#9cdcfe" opacity="0.42"/><rect x="8.0" y="54" width="1.0" height="1.600" fill="#cccccc" opacity="0.42"/><rect x="10.0" y="54" width="4.0" height="1.600" fill="#569cd6" opacity="0.42"/><rect x="15.0" y="54" width="1.0" height="1.600" fill="#da70d6" opacity="0.42"/><rect x="0.0" y="56" width="1.0" height="1.600" fill="#ffd700" opacity="0.42"/><rect x="1.0" y="56" width="1.0" height="1.600" fill="#cccccc" opacity="0.42"/><rect x="0.0" y="58" width="5.0" height="1.600" fill="#569cd6" opacity="0.42"/><rect x="6.0" y="58" width="5.0" height="1.600" fill="#4fc1ff" opacity="0.42"/><rect x="12.0" y="58" width="1.0" height="1.600" fill="#cccccc" opacity="0.42"/><rect x="14.0" y="58" width="3.0" height="1.600" fill="#dcdcaa" opacity="0.42"/><rect x="17.0" y="58" width="5.0" height="1.600" fill="#cccccc" opacity="0.42"/><rect x="0.0" y="60" width="5.0" height="1.600" fill="#569cd6" opacity="0.42"/><rect x="6.0" y="60" width="4.0" height="1.600" fill="#4fc1ff" opacity="0.42"/><rect x="11.0" y="60" width="1.0" height="1.600" fill="#cccccc" opacity="0.42"/><rect x="13.0" y="60" width="3.0" height="1.600" fill="#dcdcaa" opacity="0.42"/><rect x="16.0" y="60" width="3.0" height="1.600" fill="#cccccc" opacity="0.42"/><rect x="0.0" y="62" width="5.0" height="1.600" fill="#569cd6" opacity="0.42"/><rect x="6.0" y="62" width="6.0" height="1.600" fill="#4fc1ff" opacity="0.42"/><rect x="13.0" y="62" width="1.0" height="1.600" fill="#cccccc" opacity="0.42"/><rect x="15.0" y="62" width="3.0" height="1.600" fill="#dcdcaa" opacity="0.42"/><rect x="18.0" y="62" width="7.0" height="1.600" fill="#ce9178" opacity="0.42"/><rect x="25.0" y="62" width="1.0" height="1.600" fill="#cccccc" opacity="0.42"/><rect x="4.0" y="64" width="5.0" height="1.600" fill="#dcdcaa" opacity="0.42"/><rect x="0.0" y="66" width="2.0" height="1.600" fill="#cccccc" opacity="0.42"/><rect x="4.0" y="68" width="18.0" height="1.600" fill="#6a9955" opacity="0.42"/><rect x="4.0" y="70" width="35.0" height="1.600" fill="#6a9955" opacity="0.42"/><rect x="4.0" y="72" width="4.0" height="1.600" fill="#6a9955" opacity="0.42"/><rect x="4.0" y="74" width="15.0" height="1.600" fill="#6a9955" opacity="0.42"/><rect x="0.0" y="76" width="2.0" height="1.600" fill="#6a9955" opacity="0.42"/><rect x="0.0" y="78" width="5.0" height="1.600" fill="#dcdcaa" opacity="0.42"/><rect x="5.0" y="78" width="1.0" height="1.600" fill="#ffd700" opacity="0.42"/><rect x="2.0" y="80" width="6.0" height="1.600" fill="#4fc1ff" opacity="0.42"/><rect x="8.0" y="80" width="1.0" height="1.600" fill="#cccccc" opacity="0.42"/><rect x="2.0" y="82" width="1.0" height="1.600" fill="#da70d6" opacity="0.42"/><rect x="3.0" y="82" width="6.0" height="1.600" fill="#9cdcfe" opacity="0.42"/><rect x="9.0" y="82" width="1.0" height="1.600" fill="#cccccc" opacity="0.42"/><rect x="11.0" y="82" width="6.0" height="1.600" fill="#9cdcfe" opacity="0.42"/><rect x="17.0" y="82" width="1.0" height="1.600" fill="#da70d6" opacity="0.42"/><rect x="19.0" y="82" width="2.0" height="1.600" fill="#569cd6" opacity="0.42"/><rect x="4.0" y="84" width="6.0" height="1.600" fill="#569cd6" opacity="0.42"/><rect x="11.0" y="84" width="3.0" height="1.600" fill="#4fc1ff" opacity="0.42"/><rect x="15.0" y="84" width="1.0" height="1.600" fill="#cccccc" opacity="0.42"/><rect x="17.0" y="84" width="4.0" height="1.600" fill="#9cdcfe" opacity="0.42"/><rect x="22.0" y="84" width="2.0" height="1.600" fill="#cccccc" opacity="0.42"/><rect x="25.0" y="84" width="3.0" height="1.600" fill="#9cdcfe" opacity="0.42"/><rect x="29.0" y="84" width="3.0" height="1.600" fill="#cccccc" opacity="0.42"/><rect x="33.0" y="84" width="5.0" height="1.600" fill="#ce9178" opacity="0.42"/><rect x="40.0" y="84" width="6.0" height="1.600" fill="#9cdcfe" opacity="0.42"/><rect x="47.0" y="84" width="3.0" height="1.600" fill="#cccccc" opacity="0.42"/><rect x="51.0" y="84" width="7.0" height="1.600" fill="#ce9178" opacity="0.42"/><rect x="59.0" y="84" width="7.0" height="1.600" fill="#9cdcfe" opacity="0.42"/><rect x="67.0" y="84" width="3.0" height="1.600" fill="#ce9178" opacity="0.42"/><rect x="72.0" y="84" width="10.0" height="1.600" fill="#cccccc" opacity="0.42"/><rect x="2.0" y="86" width="1.0" height="1.600" fill="#ffd700" opacity="0.42"/><rect x="2.0" y="88" width="1.0" height="1.600" fill="#da70d6" opacity="0.42"/><rect x="4.0" y="88" width="9.0" height="1.600" fill="#9cdcfe" opacity="0.42"/><rect x="13.0" y="88" width="1.0" height="1.600" fill="#cccccc" opacity="0.42"/><rect x="15.0" y="88" width="4.0" height="1.600" fill="#569cd6" opacity="0.42"/><rect x="20.0" y="88" width="1.0" height="1.600" fill="#da70d6" opacity="0.42"/><rect x="0.0" y="90" width="2.0" height="1.600" fill="#cccccc" opacity="0.42"/><rect x="0.0" y="92" width="5.0" height="1.600" fill="#569cd6" opacity="0.42"/><rect x="6.0" y="92" width="11.0" height="1.600" fill="#dcdcaa" opacity="0.42"/><rect x="18.0" y="92" width="1.0" height="1.600" fill="#cccccc" opacity="0.42"/><rect x="20.0" y="92" width="2.0" height="1.600" fill="#ffd700" opacity="0.42"/><rect x="23.0" y="92" width="2.0" height="1.600" fill="#569cd6" opacity="0.42"/><rect x="26.0" y="92" width="1.0" height="1.600" fill="#ffd700" opacity="0.42"/><rect x="2.0" y="94" width="6.0" height="1.600" fill="#4fc1ff" opacity="0.42"/><rect x="8.0" y="94" width="1.0" height="1.600" fill="#cccccc" opacity="0.42"/><rect x="9.0" y="94" width="5.0" height="1.600" fill="#9cdcfe" opacity="0.42"/><rect x="15.0" y="94" width="1.0" height="1.600" fill="#cccccc" opacity="0.42"/><rect x="2.0" y="96" width="6.0" height="1.600" fill="#4fc1ff" opacity="0.42"/><rect x="8.0" y="96" width="1.0" height="1.600" fill="#cccccc" opacity="0.42"/><rect x="9.0" y="96" width="5.0" height="1.600" fill="#9cdcfe" opacity="0.42"/><rect x="15.0" y="96" width="2.0" height="1.600" fill="#cccccc" opacity="0.42"/><rect x="18.0" y="96" width="6.0" height="1.600" fill="#4fc1ff" opacity="0.42"/><rect x="24.0" y="96" width="5.0" height="1.600" fill="#9cdcfe" opacity="0.42"/><rect x="2.0" y="98" width="6.0" height="1.600" fill="#9cdcfe" opacity="0.42"/><rect x="8.0" y="98" width="1.0" height="1.600" fill="#cccccc" opacity="0.42"/><rect x="9.0" y="98" width="5.0" height="1.600" fill="#9cdcfe" opacity="0.42"/><rect x="15.0" y="98" width="1.0" height="1.600" fill="#cccccc" opacity="0.42"/><rect x="0.0" y="100" width="2.0" height="1.600" fill="#ffd700" opacity="0.42"/><rect x="0.0" y="102" width="5.0" height="1.600" fill="#569cd6" opacity="0.42"/><rect x="6.0" y="102" width="10.0" height="1.600" fill="#dcdcaa" opacity="0.42"/><rect x="17.0" y="102" width="1.0" height="1.600" fill="#cccccc" opacity="0.42"/><rect x="19.0" y="102" width="2.0" height="1.600" fill="#ffd700" opacity="0.42"/><rect x="22.0" y="102" width="2.0" height="1.600" fill="#569cd6" opacity="0.42"/><rect x="25.0" y="102" width="1.0" height="1.600" fill="#ffd700" opacity="0.42"/><rect x="2.0" y="104" width="1.0" height="1.600" fill="#cccccc" opacity="0.42"/><rect x="4.0" y="106" width="6.0" height="1.600" fill="#4fc1ff" opacity="0.42"/><rect x="10.0" y="106" width="1.0" height="1.600" fill="#cccccc" opacity="0.42"/><rect x="11.0" y="106" width="5.0" height="1.600" fill="#9cdcfe" opacity="0.42"/><rect x="16.0" y="106" width="1.0" height="1.600" fill="#cccccc" opacity="0.42"/><rect x="17.0" y="106" width="9.0" height="1.600" fill="#9cdcfe" opacity="0.42"/><rect x="27.0" y="106" width="1.0" height="1.600" fill="#cccccc" opacity="0.42"/><rect x="29.0" y="106" width="4.0" height="1.600" fill="#569cd6" opacity="0.42"/><rect x="4.0" y="108" width="6.0" height="1.600" fill="#4fc1ff" opacity="0.42"/><rect x="11.0" y="108" width="7.0" height="1.600" fill="#569cd6" opacity="0.42"/><rect x="19.0" y="108" width="11.0" height="1.600" fill="#569cd6" opacity="0.42"/><rect x="31.0" y="108" width="10.0" height="1.600" fill="#dcdcaa" opacity="0.42"/><rect x="43.0" y="108" width="8.0" height="1.600" fill="#ce9178" opacity="0.42"/><rect x="52.0" y="108" width="10.0" height="1.600" fill="#ce9178" opacity="0.42"/><rect x="6.0" y="110" width="10.0" height="1.600" fill="#569cd6" opacity="0.42"/><rect x="17.0" y="110" width="13.0" height="1.600" fill="#569cd6" opacity="0.42"/><rect x="31.0" y="110" width="8.0" height="1.600" fill="#ce9178" opacity="0.42"/><rect x="40.0" y="110" width="7.0" height="1.600" fill="#6a9955" opacity="0.42"/><rect x="48.0" y="110" width="13.0" height="1.600" fill="#6a9955" opacity="0.42"/><rect x="0.0" y="112" width="1.0" height="1.600" fill="#ffd700" opacity="0.42"/><rect x="0.0" y="114" width="2.0" height="1.600" fill="#808080" opacity="0.42"/><rect x="2.0" y="114" width="6.0" height="1.600" fill="#569cd6" opacity="0.42"/><rect x="8.0" y="114" width="1.0" height="1.600" fill="#808080" opacity="0.42"/><rect x="0.0" y="116" width="1.0" height="1.600" fill="#808080" opacity="0.42"/><rect x="1.0" y="116" width="5.0" height="1.600" fill="#569cd6" opacity="0.42"/><rect x="7.0" y="116" width="6.0" height="1.600" fill="#9cdcfe" opacity="0.42"/><rect x="13.0" y="116" width="1.0" height="1.600" fill="#808080" opacity="0.42"/><rect x="0.0" y="118" width="2.0" height="1.600" fill="#808080" opacity="0.42"/><rect x="2.0" y="118" width="5.0" height="1.600" fill="#569cd6" opacity="0.42"/><rect x="7.0" y="118" width="1.0" height="1.600" fill="#808080" opacity="0.42"/></svg><!--/MINIMAP-->
</div>
<!-- PANEL -->
<div id="panel">
<span class="ptab" style="left:20px;transform:scaleX(0.883);transform-origin:0 0">PROBLEMS</span>
<span class="ptab" style="left:98px;transform:scaleX(0.911);transform-origin:0 0">OUTPUT</span>
<span class="ptab" style="left:163px;transform:scaleX(0.886);transform-origin:0 0">DEBUG CONSOLE</span>
<span class="ptab" style="left:272px;color:#ccc;transform:scaleX(0.917);transform-origin:0 0">TERMINAL</span>
<span class="ptab" style="left:348px;transform:scaleX(0.836);transform-origin:0 0">PORTS</span>
<div class="abs" style="left:272px;top:27px;width:52px;height:1px;background:#0078d4"></div>
<svg style="left:1342px;top:9px" width="16" height="14" viewBox="0 0 16 14" fill="none" stroke="#ccc" stroke-width="1.100"><path d="M2.500 1h12.500l-2 12H.5z" stroke-linejoin="round"/><path d="M4 4.500 6.500 7 4 9.500M7.500 10h3.500"/></svg>
<span class="t" style="left:1362px;top:10px;font-size:12px;color:#ccc;transform:scaleX(.907);transform-origin:0 0">esbuild</span>
<svg style="left:1406px;top:10px" width="12" height="12" viewBox="0 0 12 12" fill="none" stroke="#ccc" stroke-width="1.100"><path d="M6 0v12M0 6h12"/></svg>
<svg style="left:1424px;top:13px" width="8" height="6" viewBox="0 0 8 6" fill="none" stroke="#ccc" stroke-width="1.100"><path d="M.5 1 4 4.500 7.500 1"/></svg>
<svg style="left:1444px;top:10px" width="13" height="12" viewBox="0 0 13 12" fill="none" stroke="#ccc" stroke-width="1.100"><rect x=".6" y=".6" width="11.800" height="10.800" rx="1"/><path d="M6.500 .6v10.800"/></svg>
<svg style="left:1468px;top:10px" width="11" height="13" viewBox="0 0 11 13" fill="none" stroke="#ccc" stroke-width="1.100"><path d="M.5 2.500h10M3.500 2.500V.6h4v1.900M1.500 2.500l.5 10h7l.5-10M4 5v5M5.500 5v5M7 5v5"/></svg>
<svg style="left:1491px;top:14px" width="14" height="4" viewBox="0 0 14 4" fill="#ccc"><circle cx="2" cy="2" r="1.100"/><circle cx="7" cy="2" r="1.100"/><circle cx="12" cy="2" r="1.100"/></svg>
<svg style="left:1518px;top:13px" width="10" height="6" viewBox="0 0 10 6" fill="none" stroke="#ccc" stroke-width="1.100"><path d="M.5 5.500 5 1l4.500 4.500"/></svg>
<svg style="left:1545px;top:12px" width="9" height="9" viewBox="0 0 9 9" fill="none" stroke="#ccc" stroke-width="1.100"><path d="M.5.5l8 8M8.500.5l-8 8"/></svg>
<div class="tl" style="top:34px">  run `npm fund` for details</div>
<div class="tl" style="top:68px">found <b style="color:#23d18b">0</b> vulnerabilities</div>
<div class="tl" style="top:85px">PS C:\vueProject\chap2&gt; <span style="color:#f5f543">npm</span> run dev</div>
<div class="tl" style="top:119px">&gt; chap2@0.0.0 dev</div>
<div class="tl" style="top:136px">&gt; vite</div>
<div class="tl" style="top:187px">  <b style="color:#23d18b">VITE</b> <span style="color:#0dbc79">v6.2.1</span>  ready in <b style="color:#e5e5e5">669</b> ms</div>
<div class="abs" style="left:6px;top:90px;width:8px;height:8px;border-radius:4px;border:1.500px solid #6b6b6b"></div>
<div class="abs" style="left:1557px;top:35px;width:1px;height:187px;background:#111"></div>
<div class="abs" style="left:1559px;top:34px;width:4px;height:5px;background:#2f7fc4"></div>
<div class="abs" style="left:1559px;top:47px;width:4px;height:6px;background:#5a5a5a"></div>
</div>
<!-- STATUS BAR -->
<div id="status">
  <div class="abs" style="left:0;top:0;width:34px;height:21px;background:#0078d4"></div>
  <svg style="left:0;top:0" width="34" height="21" viewBox="0 0 34 21" fill="none" stroke="#e8f6ff" stroke-width="1.250"><path d="M12.300 7.400 17.200 11.300 12.300 15.800M22 4.200 17.800 8.100 22 11.600"/></svg>
  <svg style="left:42px;top:4px" width="13" height="13" viewBox="0 0 13 13" fill="none" stroke="#ccc" stroke-width="1.100"><circle cx="6.500" cy="6.500" r="5.800"/><path d="M4.200 4.200l4.600 4.600M8.800 4.200 4.200 8.800"/></svg>
  <span class="s" style="left:58px">0</span>
  <svg style="left:69px;top:4px" width="14" height="13" viewBox="0 0 14 13" fill="none" stroke="#ccc" stroke-width="1.100" stroke-linejoin="round"><path d="M7 1 13.300 12H.7z"/><path d="M7 5v3.800M7 9.800v1.100"/></svg>
  <span class="s" style="left:86px">0</span>
  <span class="s" style="left:1528px;letter-spacing:-.25px">Ln 13, Col 16</span>
  <span class="s" style="left:1612px;letter-spacing:-.55px">Spaces: 2</span>
  <span class="s" style="left:1677px;letter-spacing:-.4px">UTF-8</span>
  <!-- Sogou IME toolbar overlay -->
  <div class="abs" style="left:1730px;top:-1px;width:190px;height:22px;background:#fdfdfd;border-radius:6px 0 0 0"></div>
  <div class="abs" style="left:1715px;top:-4px;width:27px;height:26px;background:#e9451d;border-radius:5px;transform:rotate(-8deg)"></div>
  <span class="t" style="left:1719px;top:-5px;font-size:28px;font-weight:bold;color:#fff;font-style:italic;transform:rotate(-8deg)">S</span>
  <span class="t" style="left:1746px;top:2px;font-size:16px;font-weight:bold;color:#2772be;font-family:'Liberation Sans','Noto Sans CJK SC',sans-serif">英</span>
  <span class="t" style="left:1771px;top:0px;font-size:15px;font-weight:bold;color:#2772be">&#8226;,</span>
  <svg style="left:1791px;top:3px" width="16" height="16" viewBox="0 0 16 16" fill="none" stroke="#2772be" stroke-width="1.500"><circle cx="8" cy="8" r="6.700"/><path d="M4.500 9.500c1 2.200 6 2.200 7 0"/><path d="M6 5v2.500M10 5v2.500" stroke-width="1.600"/></svg>
  <svg style="left:1815px;top:2px" width="12" height="18" viewBox="0 0 12 18" fill="none" stroke="#2772be" stroke-width="1.500"><rect x="3.500" y=".8" width="5" height="10" rx="2.500" fill="#2772be"/><path d="M1 8c0 6 10 6 10 0M6 13v4"/></svg>
  <svg style="left:1834px;top:4px" width="18" height="14" viewBox="0 0 18 14"><rect x=".8" y=".8" width="16.400" height="12.400" rx="1.500" fill="#2772be"/><path d="M3 4h2M6.500 4h2M10 4h2M13.500 4h1.500M3 7h2M6.500 7h2M10 7h2M13.500 7h1.500M4.500 10.200h9" stroke="#fff" stroke-width="1.400"/></svg>
  <svg style="left:1858px;top:2px" width="15" height="17" viewBox="0 0 16 18"><circle cx="7" cy="4.500" r="3.300" fill="#d4d4d4"/><path d="M1 14.500c0-5 3-6.500 6-6.500s6 1.500 6 6.500z" fill="#d4d4d4"/><rect x="9.500" y="10.500" width="5" height="6" rx=".8" fill="#f4f4f4" stroke="#c4c4c4" stroke-width=".8"/></svg>
  <svg style="left:1880px;top:4px" width="14" height="13" viewBox="0 0 18 15"><path d="M5 0h2.500c.5 1.500 2.500 1.500 3 0H13l5 3.500-2 3-2-1V15H4V5.500l-2 1-2-3z" fill="#2772be"/></svg>
  <svg style="left:1902px;top:4px" width="13" height="13" viewBox="0 0 13 13" fill="#2772be"><rect x="0" y="0" width="5.500" height="5.500"/><rect x="8" y=".5" width="4.500" height="4.500" fill="#fff" stroke="#2772be" stroke-width="1"/><rect x="0" y="7.500" width="5.500" height="5.500"/><rect x="7.500" y="7.500" width="5.500" height="5.500"/></svg>
</div>
<!-- TASKBAR -->
<div id="taskbar">
  <svg style="left:16px;top:12px" width="16" height="16" viewBox="0 0 17 17" fill="#fff"><path d="M0 2.400 6.900 1.400V8H0zM7.800 1.300 17 0v8H7.800zM0 8.900h6.900v6.600L0 14.500zM7.800 8.900H17V17l-9.200-1.300z"/></svg>
  <!-- VS Code (active) -->
  <div class="tbtn" style="left:51px;width:160px;background:rgba(255,255,255,.21)"><div class="ul"></div>
    <svg style="left:9px;top:8px" width="24" height="24" viewBox="0 0 100 100"><path d="M71 3 31 41 12 27 3 31v38l9 4 19-14 40 38 26-11V14L71 3z" fill="#2489ca"/><path d="M71 3 97 14v72L71 97z" fill="#1070b3"/><path d="M73 28 42 50l31 22V28z" fill="#3c5866"/><path d="M12 38v24l13-12z" fill="#3c5866"/></svg>
    <div class="abs" style="left:39px;top:17px;width:6px;height:6px;border-radius:3px;background:#fff"></div><span class="tx" style="left:50px;letter-spacing:.1px">Vue2_6.vue - ch...</span></div>
  <!-- Chrome -->
  <div class="tbtn" style="left:216px;width:152px"><div class="ul"></div>
    <svg style="left:6px;top:8px" width="24" height="24" viewBox="0 0 24 24"><circle cx="12" cy="12" r="12" fill="#db4437"/><path d="M12 12 1.600 6A12 12 0 0 0 8 23.300z" fill="#0f9d58"/><path d="M12 12l-4 11.300A12 12 0 0 0 22.400 6z" fill="#ffcd40"/><path d="M12 12h0z"/><circle cx="12" cy="12" r="5.500" fill="#fff"/><circle cx="12" cy="12" r="4.300" fill="#4285f4"/></svg>
    <span class="tx" style="left:34px;font-family:'Liberation Sans','Noto Sans CJK SC',sans-serif">课堂派-简单好用的...</span></div>
  <!-- Explorer -->
  <div class="tbtn" style="left:377px;width:152px"><div class="ul"></div>
    <svg style="left:9px;top:9px" width="16" height="22" viewBox="0 0 16 22"><path d="M1 2.500 3 .5h8.500l3 3V20l-2 1.500H2.500L1 20z" fill="#f9e08f"/><path d="M3 .5h5v21H2.500L1 20V2.500z" fill="#f0c654"/><path d="M11.500.5l3 3h-3z" fill="#fff3c4"/></svg>
    <span class="tx" style="left:33px;letter-spacing:.45px">vueProject</span></div>
  <!-- PPT 1 -->
  <div class="tbtn" style="left:538px;width:152px"><div class="ul"></div>
    <svg style="left:7px;top:9px" width="23" height="22" viewBox="0 0 23 22"><rect x="9" y="2.500" width="13.500" height="17" rx="1" fill="#fff" stroke="#d24726" stroke-width="1"/><path d="M13 6h7M13 9.500h7M13 13h7M13 16h7" stroke="#d24726" stroke-width="1.500"/><path d="M0 2.200 13 0v22L0 19.800z" fill="#d24726"/><text x="3.200" y="15.500" font-family="Liberation Sans,sans-serif" font-size="11.500" font-weight="bold" fill="#fff">P</text></svg>
    <span class="tx" style="left:34px;font-family:'Liberation Sans','Noto Sans CJK SC',sans-serif;letter-spacing:.2px">vuejs3.x-第2章Vue...</span></div>
  <!-- PPT 2 -->
  <div class="tbtn" style="left:698px;width:152px"><div class="ul"></div>
    <svg style="left:7px;top:9px" width="23" height="22" viewBox="0 0 23 22"><rect x="9" y="2.500" width="13.500" height="17" rx="1" fill="#fff" stroke="#d24726" stroke-width="1"/><path d="M13 6h7M13 9.500h7M13 13h7M13 16h7" stroke="#d24726" stroke-width="1.500"/><path d="M0 2.200 13 0v22L0 19.800z" fill="#d24726"/><text x="3.200" y="15.500" font-family="Liberation Sans,sans-serif" font-size="11.500" font-weight="bold" fill="#fff">P</text></svg>
    <span class="tx" style="left:34px;letter-spacing:.25px">V4.4.1 - PowerPoi...</span></div>
  <!-- tray -->
  <svg style="left:1596px;top:12px" width="16" height="16" viewBox="0 0 16 16"><rect x=".5" y="1.500" width="15" height="13.500" rx="4" fill="#f39a2b"/><circle cx="3" cy="3" r="2.200" fill="#f7b34d"/><circle cx="13" cy="3" r="2.200" fill="#f7b34d"/><circle cx="8" cy="8.500" r="4.200" fill="#fce3b5"/><circle cx="8" cy="8.500" r="2.600" fill="#f39a2b"/></svg>
  <svg style="left:1667px;top:12px" width="18" height="16" viewBox="0 0 18 16" fill="none" stroke="#fff" stroke-width="1.200"><rect x="3.500" y="1.500" width="13" height="9"/><path d="M10 10.500v3M6.500 14h7"/><rect x=".6" y=".6" width="4" height="5.500" fill="#1a3040"/><path d="M1.500 2.200h2"/></svg>
  <svg style="left:1717px;top:11px" width="17" height="18" viewBox="0 0 17 18"><rect x=".5" y=".5" width="13" height="15" rx="1.500" fill="#e9efe9" stroke="#9ab"/><path d="M3 3.500l3.500 8 1.500-3 3 3.500 1.500-1.200-3-3.500 3-1z" fill="#2e6e3a"/><path d="M10 11l5 3-5 3z" fill="#4caf50"/></svg>
  <span class="t" style="left:1741px;top:14px;font-size:14px;color:#fff;font-family:'Liberation Sans','Noto Sans CJK SC',sans-serif">英</span>
  <div class="abs" style="left:1768px;top:13px;width:15px;height:15px;background:#e9451d;border-radius:3px;transform:rotate(-10deg)"></div>
  <span class="t" style="left:1770px;top:12px;font-size:16px;font-weight:bold;font-style:italic;color:#fff;transform:rotate(-10deg)">S</span>
  <span class="t" style="left:1815px;top:5px;font-size:12px;color:#fff;letter-spacing:.2px">14:45</span>
  <span class="t" style="left:1801px;top:24px;font-size:12px;color:#fff;letter-spacing:.65px">2025/3/10</span>
  <svg style="left:1879px;top:12px" width="17" height="17" viewBox="0 0 17 17" fill="none" stroke="#fff" stroke-width="1.200"><path d="M.7.700h15v12.800h-5.200L8.200 15.800 5.900 13.500H.7z"/></svg>
  <div class="abs" style="left:1915px;top:0;width:1px;height:40px;background:#6f7f8a"></div>
</div>
</body>
</html>
